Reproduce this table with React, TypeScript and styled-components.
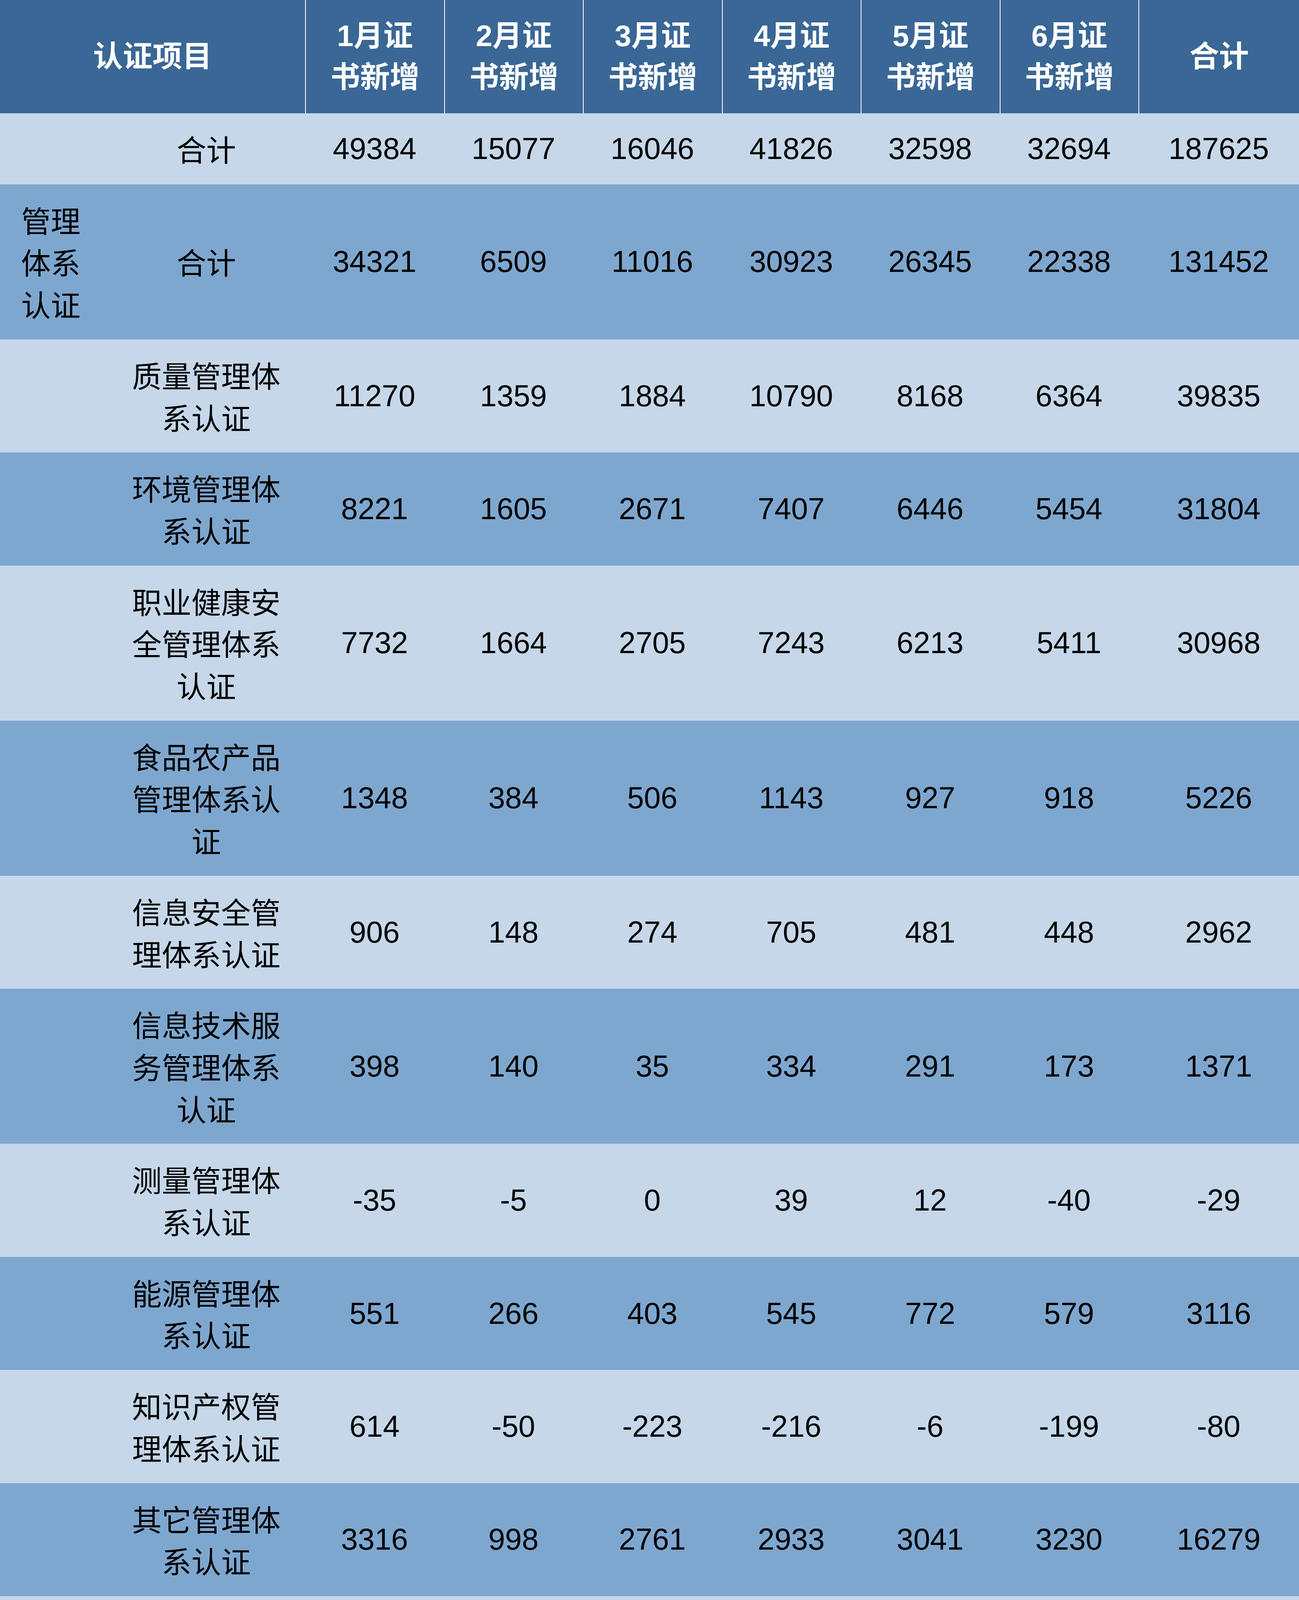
import React from "react";
import styled, { createGlobalStyle } from "styled-components";

const GlobalStyle = createGlobalStyle`
  html, body {
    margin: 0;
    padding: 0;
    background: #ffffff;
  }
  body {
    font-family: "Liberation Sans", "Noto Sans CJK SC", sans-serif;
  }
`;

type Item = {
  group?: string;
  name: string;
  vals: number[];
};

const months = ["1", "2", "3", "4", "5", "6"];

const rows: Item[] = [
  { name: "合计", vals: [49384, 15077, 16046, 41826, 32598, 32694, 187625] },
  { group: "管理体系认证", name: "合计", vals: [34321, 6509, 11016, 30923, 26345, 22338, 131452] },
  { name: "质量管理体系认证", vals: [11270, 1359, 1884, 10790, 8168, 6364, 39835] },
  { name: "环境管理体系认证", vals: [8221, 1605, 2671, 7407, 6446, 5454, 31804] },
  { name: "职业健康安全管理体系认证", vals: [7732, 1664, 2705, 7243, 6213, 5411, 30968] },
  { name: "食品农产品管理体系认证", vals: [1348, 384, 506, 1143, 927, 918, 5226] },
  { name: "信息安全管理体系认证", vals: [906, 148, 274, 705, 481, 448, 2962] },
  { name: "信息技术服务管理体系认证", vals: [398, 140, 35, 334, 291, 173, 1371] },
  { name: "测量管理体系认证", vals: [-35, -5, 0, 39, 12, -40, -29] },
  { name: "能源管理体系认证", vals: [551, 266, 403, 545, 772, 579, 3116] },
  { name: "知识产权管理体系认证", vals: [614, -50, -223, -216, -6, -199, -80] },
  { name: "其它管理体系认证", vals: [3316, 998, 2761, 2933, 3041, 3230, 16279] },
  { group: "产品认证", name: "合计", vals: [13358, 8687, 5477, 10117, 5828, 9930, 53397] },
  { name: "强制性产品认证", vals: [-165, 1122, 1412, 3422, 4773, 7374, 17938] },
  { name: "食品农产品", vals: [5665, -296, 1130, 435, -1949, -355, 4630] },
  { name: "自愿性工业产品", vals: [7858, 7861, 2935, 6260, 3004, 2911, 30829] },
  { group: "服务认证", name: "合计", vals: [1705, -119, -447, 786, 425, 426, 2776] },
  { name: "国家推行的服务认证", vals: [-3, -22, -5, 7, 4, 0, -19] },
  { name: "一般服务认证", vals: [1708, -97, -442, 779, 421, 426, 2795] },
];

const COLS = "275px 506px repeat(6, 355.5px) 1fr";
const LINE = "107.7px";

const Page = styled.div`
  width: 3325px;
  min-height: 6047px;
  background: #ffffff;
`;

const Table = styled.div`
  display: flex;
  flex-direction: column;
  width: 100%;
`;

const HeadRow = styled.div`
  display: grid;
  grid-template-columns: ${COLS};
  background: #3a6796;
  height: 290px;
`;

const HeadCell = styled.div<{ $span?: number; $first?: boolean }>`
  grid-column: span ${(p) => p.$span || 1};
  display: flex;
  align-items: center;
  justify-content: center;
  text-align: center;
  box-sizing: border-box;
  border-left: ${(p) => (p.$first ? "none" : "2px solid #ffffff")};
  padding: 0 40px;
  color: #ffffff;
  font-family: "Liberation Sans", "Noto Sans CJK SC", sans-serif;
  font-weight: 700;
  font-size: 76px;
  line-height: 106px;
`;

const Row = styled.div<{ $shade: boolean }>`
  display: grid;
  grid-template-columns: ${COLS};
  align-items: center;
  background: ${(p) => (p.$shade ? "#7ea7cf" : "#c5d7e9")};
  padding: 37px 0;
`;

const GroupCell = styled.div`
  box-sizing: border-box;
  padding-left: 54px;
  font-family: "Noto Sans CJK SC", sans-serif;
  font-size: 76px;
  line-height: ${LINE};
  color: #000000;
  max-width: calc(54px + 2.3em);
`;

const NameCell = styled.div`
  display: flex;
  justify-content: center;
`;

const NameText = styled.div`
  max-width: 5.3em;
  text-align: center;
  font-family: "Noto Sans CJK SC", sans-serif;
  font-size: 76px;
  line-height: ${LINE};
  color: #000000;
`;

const NumCell = styled.div`
  text-align: center;
  font-family: "Liberation Sans", Arial, sans-serif;
  font-size: 77px;
  line-height: ${LINE};
  color: #000000;
`;

export default function App() {
  return (
    <Page>
      <GlobalStyle />
      <Table>
        <HeadRow>
          <HeadCell $span={2} $first>
            认证项目
          </HeadCell>
          {months.map((m) => (
            <HeadCell key={m}>
              {m}月证
              <br />
              书新增
            </HeadCell>
          ))}
          <HeadCell>合计</HeadCell>
        </HeadRow>
        {rows.map((r, i) => (
          <Row key={i} $shade={i % 2 === 1}>
            <GroupCell>{r.group}</GroupCell>
            <NameCell>
              <NameText>{r.name}</NameText>
            </NameCell>
            {r.vals.map((v, j) => (
              <NumCell key={j}>{v}</NumCell>
            ))}
          </Row>
        ))}
      </Table>
    </Page>
  );
}
